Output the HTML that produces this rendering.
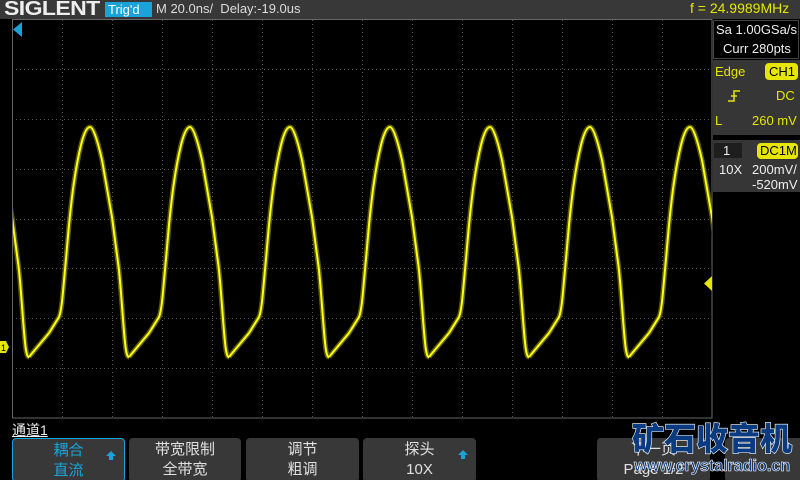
<!DOCTYPE html><html><head><meta charset="utf-8"><style>
html,body{margin:0;width:800px;height:480px;overflow:hidden}
body{background:#000;position:relative;font-family:"Liberation Sans","Noto Sans CJK SC",sans-serif}
.a{position:absolute;white-space:nowrap}
.top{left:0;top:0;width:800px;height:19px;background:#383838}
.btn{position:absolute;top:438px;height:44px;background:#383838;border-radius:4px;color:#e0e0e0;font-size:15px;text-align:center;line-height:20px;padding-top:2px;box-sizing:border-box;white-space:nowrap;overflow:hidden}
.up{position:absolute;right:8px;top:12px;width:0;height:0;border-left:5px solid transparent;border-right:5px solid transparent;border-bottom:5px solid #1aa3d9}
.up:after{content:"";position:absolute;left:-2px;top:5px;width:4px;height:4px;background:#1aa3d9}
.rp{color:#e6e600;font-size:13px}
</style></head><body>
<div class="a top"></div>
<div class="a" style="left:4px;top:-2px;font-size:20px;font-weight:bold;color:#eee;letter-spacing:-0.5px;transform:scaleX(1.15);transform-origin:left">SIGLENT</div>
<div class="a" style="left:105px;top:2px;width:44px;height:15px;background:#1aa3d9;color:#fff;font-size:13px;line-height:15px;padding-left:3px">Trig'd</div>
<div class="a" style="left:156px;top:1px;color:#ddd;font-size:13px">M 20.0ns/&nbsp; Delay:-19.0us</div>
<div class="a" style="left:690px;top:0px;color:#e6e600;font-size:14px">f = 24.9989MHz</div>
<svg class="a" style="left:0;top:0" width="800" height="480">
<defs><clipPath id="c"><rect x="13" y="20" width="699" height="398"/></clipPath>
<path id="w" d="M0,357 L10,345 L20,333 L30,317 C33,310 34,290 36,270 L40,225 C43,195 46,170 52,145 C55,133 58,127 61,127 C64,127 68,138 73,160 L83,217 L90,270 C93,300 95,340 97,350 C98,356 99,357 100,357" fill="none"/></defs>
<g stroke="#555" stroke-width="1" stroke-dasharray="1,3">
<line x1="62.5" y1="20" x2="62.5" y2="418"/><line x1="112.5" y1="20" x2="112.5" y2="418"/><line x1="162.5" y1="20" x2="162.5" y2="418"/><line x1="212.5" y1="20" x2="212.5" y2="418"/><line x1="262.5" y1="20" x2="262.5" y2="418"/><line x1="312.5" y1="20" x2="312.5" y2="418"/><line x1="362.5" y1="20" x2="362.5" y2="418"/><line x1="412.5" y1="20" x2="412.5" y2="418"/><line x1="462.5" y1="20" x2="462.5" y2="418"/><line x1="512.5" y1="20" x2="512.5" y2="418"/><line x1="562.5" y1="20" x2="562.5" y2="418"/><line x1="612.5" y1="20" x2="612.5" y2="418"/><line x1="662.5" y1="20" x2="662.5" y2="418"/>
<line x1="12" y1="69.5" x2="712" y2="69.5"/><line x1="12" y1="119.5" x2="712" y2="119.5"/><line x1="12" y1="169.5" x2="712" y2="169.5"/><line x1="12" y1="219.5" x2="712" y2="219.5"/><line x1="12" y1="268.5" x2="712" y2="268.5"/><line x1="12" y1="318.5" x2="712" y2="318.5"/><line x1="12" y1="368.5" x2="712" y2="368.5"/>
</g>
<rect x="12.5" y="19.5" width="699.5" height="398.5" fill="none" stroke="#666"/>
<g clip-path="url(#c)">
<g stroke="#5a5a00" stroke-width="5">
<use href="#w" x="-71"/><use href="#w" x="29"/><use href="#w" x="129"/><use href="#w" x="229"/><use href="#w" x="329"/><use href="#w" x="429"/><use href="#w" x="529"/><use href="#w" x="629"/></g>
<g stroke="#ffff10" stroke-width="2">
<use href="#w" x="-71"/><use href="#w" x="29"/><use href="#w" x="129"/><use href="#w" x="229"/><use href="#w" x="329"/><use href="#w" x="429"/><use href="#w" x="529"/><use href="#w" x="629"/></g>
</g>
<polygon points="22,22 13,29.5 22,37" fill="#1aa3d9"/>
<polygon points="712,276 704,283.5 712,291" fill="#e6e600"/>
<polygon points="0,341 6,341 9,347 6,353 0,353" fill="#e6e600"/>
<text x="1" y="351" font-size="9" font-family="Liberation Sans" fill="#000">1</text>
<rect x="713.5" y="20.5" width="85" height="38" fill="#000" stroke="#444"/>
<rect x="713" y="60" width="87" height="75" fill="#363636"/>
<rect x="713" y="140" width="87" height="52" fill="#363636"/>
<rect x="714" y="143" width="28" height="15" fill="#1e1e1e"/>
<rect x="765" y="63" width="33" height="17" rx="4" fill="#e6e600"/>
<rect x="757" y="143" width="41" height="16" rx="4" fill="#e6e600"/>
<path d="M728,101 h6 v-10 h6" stroke="#e6e600" fill="none" stroke-width="1.5"/><path d="M731,96 h6" stroke="#e6e600" stroke-width="1.5"/>
</svg>
<div class="a rp" style="left:716px;top:22px;color:#eee">Sa 1.00GSa/s</div>
<div class="a rp" style="left:723px;top:41px;color:#eee">Curr 280pts</div>
<div class="a rp" style="left:715px;top:64px">Edge</div>
<div class="a rp" style="left:769px;top:64px;color:#000">CH1</div>
<div class="a rp" style="left:776px;top:88px">DC</div>
<div class="a rp" style="left:715px;top:113px">L</div>
<div class="a rp" style="left:752px;top:113px">260 mV</div>
<div class="a rp" style="left:723px;top:143px;color:#eee">1</div>
<div class="a rp" style="left:760px;top:143px;color:#000">DC1M</div>
<div class="a rp" style="left:719px;top:162px;color:#eee">10X</div>
<div class="a rp" style="left:752px;top:162px;color:#eee">200mV/</div>
<div class="a rp" style="left:752px;top:177px;color:#eee">-520mV</div>
<div class="a" style="left:12px;top:420px;color:#eee;font-size:14px;text-decoration:underline">通道1</div>
<div class="btn" style="left:12px;width:113px;border:1px solid #1aa3d9;color:#1aa3d9">耦合<br>直流<div class="up"></div></div>
<div class="btn" style="left:129px;width:112px">带宽限制<br>全带宽</div>
<div class="btn" style="left:246px;width:113px">调节<br>粗调</div>
<div class="btn" style="left:363px;width:113px">探头<br>10X<div class="up"></div></div>
<div class="btn" style="left:597px;width:113px">下一页<br>Page 1/2</div>
<div class="btn" style="left:725px;width:80px"></div>
<div class="a" style="left:632px;top:418px;font-size:32px;font-weight:900;color:#0a3a80;letter-spacing:0px;-webkit-text-stroke:1.2px #fff;paint-order:stroke fill;font-family:'Noto Sans CJK SC',sans-serif;line-height:38px">矿石收音机</div>
<div class="a" style="left:634px;top:457px;font-size:16.5px;font-weight:bold;color:#0a3a80;-webkit-text-stroke:0.6px #fff;line-height:18px;letter-spacing:-0.2px">www.crystalradio.cn</div>
</body></html>
